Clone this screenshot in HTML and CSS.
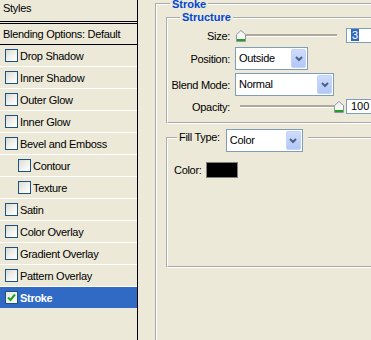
FILE: index.html
```html
<!DOCTYPE html>
<html>
<head>
<meta charset="utf-8">
<link rel="stylesheet" href="styles.css">
</head>
<body>
<div class="dialog">
  <aside class="styles-list">
    <div class="list-head">Styles</div>
    <div class="list-item blend">Blending Options: Default</div>
    <div class="list-item"><span class="cb"></span>Drop Shadow</div>
    <div class="list-item"><span class="cb"></span>Inner Shadow</div>
    <div class="list-item"><span class="cb"></span>Outer Glow</div>
    <div class="list-item"><span class="cb"></span>Inner Glow</div>
    <div class="list-item"><span class="cb"></span>Bevel and Emboss</div>
    <div class="list-item sub"><span class="cb"></span>Contour</div>
    <div class="list-item sub"><span class="cb"></span>Texture</div>
    <div class="list-item"><span class="cb"></span>Satin</div>
    <div class="list-item"><span class="cb"></span>Color Overlay</div>
    <div class="list-item"><span class="cb"></span>Gradient Overlay</div>
    <div class="list-item"><span class="cb"></span>Pattern Overlay</div>
    <div class="list-item active"><span class="cb checked"><svg width="9" height="9" viewBox="0 0 9 9"><path d="M1 4.5L3.5 7L8 1.5" fill="none" stroke="#21A121" stroke-width="2"/></svg></span>Stroke</div>
  </aside>
  <main class="panel">
    <fieldset class="group outer">
      <legend class="title">Stroke</legend>
      <fieldset class="group structure">
        <legend class="title">Structure</legend>
        <div class="form">
          <span class="lbl">Size:</span>
          <div class="ctl">
            <div class="slider"><div class="track"></div><span class="thumb" style="left:1px"><svg width="10" height="12" viewBox="0 0 10 12"><path d="M0.5 11.5V4.5L5 0.5L9.5 4.5V11.5Z" fill="#F6F6F2" stroke="#8C97A8"/><rect x="1" y="9" width="8" height="2" fill="#21A121"/></svg></span></div>
            <div class="num"><span class="hl">3</span></div>
          </div>
          <span class="lbl">Position:</span>
          <div class="combo w-pos"><span class="combo-text">Outside</span><span class="combo-btn"><svg width="8" height="6" viewBox="0 0 8 6"><path d="M1 1L4 4L7 1" fill="none" stroke="#4D6185" stroke-width="2"/></svg></span></div>
          <span class="lbl">Blend Mode:</span>
          <div class="combo w-blend"><span class="combo-text">Normal</span><span class="combo-btn"><svg width="8" height="6" viewBox="0 0 8 6"><path d="M1 1L4 4L7 1" fill="none" stroke="#4D6185" stroke-width="2"/></svg></span></div>
          <span class="lbl">Opacity:</span>
          <div class="ctl">
            <div class="slider"><div class="track"></div><span class="thumb" style="left:99px"><svg width="10" height="12" viewBox="0 0 10 12"><path d="M0.5 11.5V4.5L5 0.5L9.5 4.5V11.5Z" fill="#F6F6F2" stroke="#8C97A8"/><rect x="1" y="9" width="8" height="2" fill="#21A121"/></svg></span></div>
            <div class="num">100</div>
          </div>
        </div>
      </fieldset>
      <fieldset class="group fill">
        <legend class="fill-legend"><span class="lbl fill-lbl">Fill Type:</span><div class="combo w-fill"><span class="combo-text">Color</span><span class="combo-btn"><svg width="8" height="6" viewBox="0 0 8 6"><path d="M1 1L4 4L7 1" fill="none" stroke="#4D6185" stroke-width="2"/></svg></span></div></legend>
        <div class="color-row"><span class="lbl">Color:</span><span class="swatch"></span></div>
      </fieldset>
    </fieldset>
  </main>
</div>
</body>
</html>
```
FILE: styles.css
```css
html, body {
  margin: 0;
}
body {
  width: 371px;
  height: 340px;
  overflow: hidden;
  background: #ECE9D8;
  font: 11px "Liberation Sans", Arial, sans-serif;
  color: #000;
}
.dialog {
  display: flex;
  height: 340px;
}
.styles-list {
  width: 137px;
  flex: none;
  border-right: 1px solid #000;
  letter-spacing: -0.3px;
}
.list-head {
  height: 21px;
  line-height: 17px;
  padding-left: 3px;
  border-bottom: 3px double #000;
}
.list-item {
  height: 21px;
  display: flex;
  align-items: center;
  gap: 2px;
  padding-left: 5px;
  border-bottom: 1px solid #fff;
  white-space: nowrap;
}
.list-item.blend {
  height: 20px;
  padding-left: 3px;
  border-bottom-color: #000;
}
.list-item.sub {
  padding-left: 18px;
}
.list-item.active {
  background: #316AC5;
  color: #fff;
  font-weight: bold;
  border-bottom: none;
}
.cb {
  width: 11px;
  height: 11px;
  flex: none;
  border: 1px solid #1C5180;
  background: linear-gradient(135deg, #DCDCD5, #F7F7F5 70%, #fff);
  display: flex;
  align-items: center;
  justify-content: center;
}
.cb.checked {
  background: linear-gradient(135deg, #E4E4DF, #fff);
}
.panel {
  flex: 1;
  overflow: hidden;
  padding-left: 17px;
}
.group {
  border: 2px groove #fff;
  margin: 0;
  padding: 0;
  min-width: 0;
}
.title {
  font-weight: bold;
  color: #0046D5;
  line-height: 11px;
  padding: 0 2px;
}
.outer {
  width: 260px;
  margin-top: -1px;
  padding: 4px 0 100px 0;
}
.outer > .title {
  margin-left: 13px;
  line-height: 9px;
  position: relative;
  top: 1px;
}
.structure {
  margin-left: 9px;
  padding: 0 0 8px 0;
}
.structure > .title {
  margin-left: 12px;
}
.form {
  display: grid;
  grid-template-columns: 62px auto;
  grid-template-rows: 16px 23px 23px 15px;
  column-gap: 5px;
  row-gap: 3px;
  margin-top: 5px;
  align-items: center;
}
.lbl {
  text-align: right;
  letter-spacing: -0.3px;
  white-space: nowrap;
}
.ctl {
  display: flex;
  align-self: start;
  gap: 3px;
}
.slider {
  position: relative;
  width: 108px;
  height: 15px;
  display: flex;
  align-items: center;
  padding: 0 6px 0 5px;
  box-sizing: border-box;
}
.track {
  flex: 1;
  height: 2px;
  background: #ADAA9C;
  border-bottom: 1px solid #fff;
}
.thumb {
  position: absolute;
  top: 2px;
  width: 10px;
  height: 12px;
  display: block;
}
.thumb svg {
  display: block;
}
.num {
  width: 40px;
  height: 13px;
  line-height: 13px;
  border: 1px solid #7F9DB9;
  background: #fff;
  padding-left: 4px;
  white-space: nowrap;
}
.hl {
  background: #316AC5;
  color: #fff;
  padding: 0 1px;
}
.combo {
  display: flex;
  height: 21px;
  border: 1px solid #7F9DB9;
  background: #fff;
}
.w-pos { width: 71px; }
.w-blend { width: 97px; }
.w-fill { width: 75px; }
.combo-text {
  flex: 1;
  padding-left: 3px;
  line-height: 21px;
  letter-spacing: -0.3px;
  white-space: nowrap;
}
.combo-btn {
  width: 13px;
  margin: 1px;
  border: 1px solid #C3D3FB;
  border-radius: 2px;
  background: linear-gradient(#CEDCFC, #B2C7F6);
  display: flex;
  align-items: center;
  justify-content: center;
}
.fill {
  margin: 5px 0 0 9px;
  padding: 0 0 88px 0;
}
.fill-legend {
  display: flex;
  align-items: flex-start;
  height: 17px;
  margin-left: 9px;
  padding: 0 5px 0 2px;
}
.fill-lbl {
  line-height: 17px;
  margin-right: 6px;
}
.color-row {
  display: flex;
  align-items: center;
  gap: 4px;
  margin: 16px 0 0 6px;
}
.swatch {
  width: 30px;
  height: 14px;
  border: 1px solid #808080;
  background: #000;
}
```
